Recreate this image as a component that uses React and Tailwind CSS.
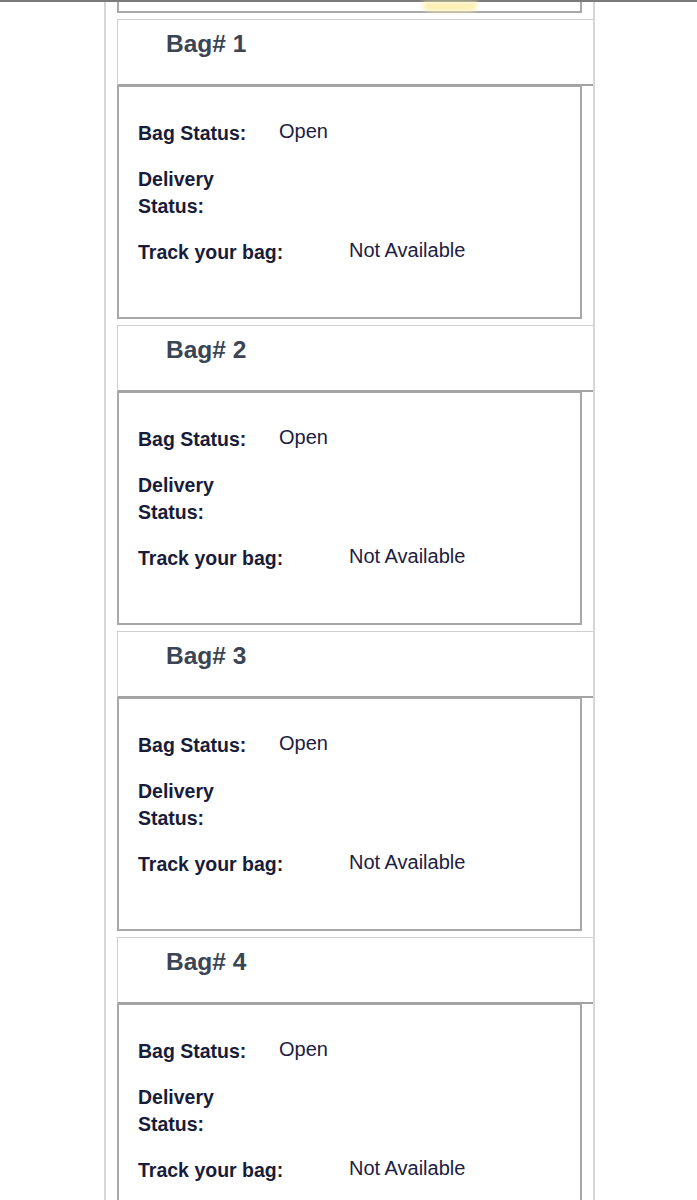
import React from "react";

const font = { fontFamily: '"Liberation Sans", Arial, Helvetica, sans-serif' };

function Bag({ n }) {
  return (
    <div className="mt-[6px]">
      <div className="h-[67px] border-t-[1.5px] border-l-[1.5px] border-b-[2px] border-t-[#cfcfcf] border-l-[#cfcfcf] border-b-[#a3a3a3] bg-white pl-[48px] pt-[9px]">
        <div className="text-[24.5px] font-bold leading-[29px] text-[#3b4553]">Bag# {n}</div>
      </div>
      <div className="mr-[11px] h-[233px] border-[2px] border-t-[1.5px] border-[#a8a8a8] bg-white pl-[19px] pt-[33px]">
        <div className="flex flex-col gap-[19px]">
          <div className="flex items-start">
            <div className="w-[141px] text-[19.5px] font-bold leading-[27px] text-[#181c3a]">Bag Status:</div>
            <div className="text-[20px] leading-[23px] text-[#1c2040]">Open</div>
          </div>
          <div className="flex items-start">
            <div className="w-[100px] text-[19.5px] font-bold leading-[27px] text-[#181c3a]">Delivery Status:</div>
            <div className="text-[20px] leading-[23px] text-[#1c2040]"></div>
          </div>
          <div className="flex items-start">
            <div className="w-[211px] text-[19.5px] font-bold leading-[27px] text-[#181c3a]">Track your bag:</div>
            <div className="text-[20px] leading-[23px] text-[#1c2040]">Not Available</div>
          </div>
        </div>
      </div>
    </div>
  );
}

export default function App() {
  return (
    <div className="h-[1200px] w-[697px] overflow-hidden bg-white" style={font}>
      <div className="h-[1.5px] w-full bg-[#7a7a7a]" />
      <div className="ml-[104px] w-[491px] border-x-2 border-[#d6d6d6] pl-[11px]">
        <div className="mr-[11px] h-[11px] border-x-2 border-b-2 border-[#a8a8a8] bg-white">
          <div className="ml-[304px] h-[9px] w-[54px] rounded-b-md bg-[#fcefb0] blur-[2px]" />
        </div>
        {[1, 2, 3, 4].map((n) => (
          <Bag key={n} n={n} />
        ))}
      </div>
    </div>
  );
}
